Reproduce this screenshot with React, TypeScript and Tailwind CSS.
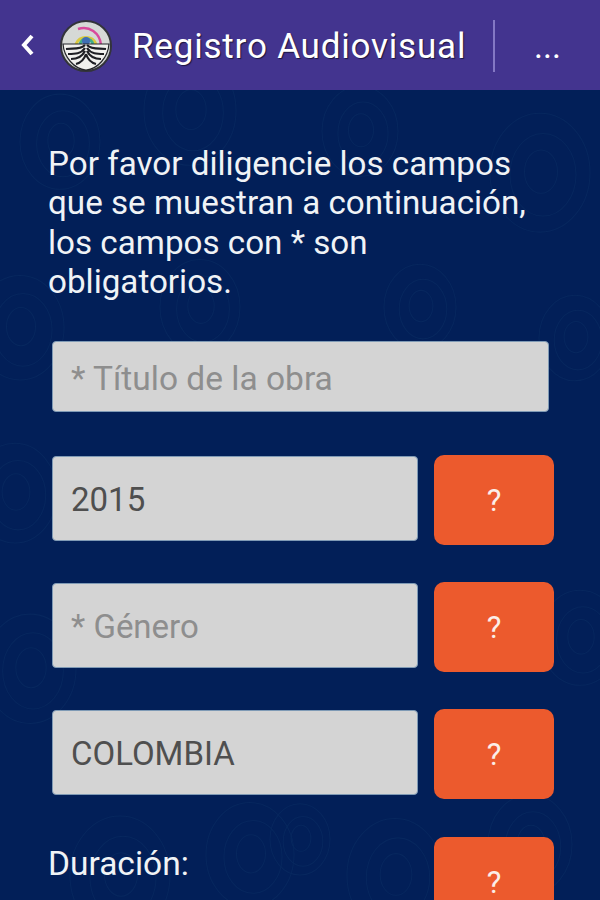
const font = "font-['Roboto','Liberation_Sans',sans-serif]";

function Logo() {
  return (
    <svg width="54" height="54" viewBox="0 0 54 54" className="shrink-0">
      <circle cx="27" cy="27" r="25" fill="#d6d9d6" stroke="#33343a" strokeWidth="2" />
      <path d="M19 10 C 30 6, 41 14, 42 26" fill="none" stroke="#d84a9c" strokeWidth="2.5" />
      <path d="M17 25 A 11 11 0 0 1 37 25" fill="none" stroke="#d9c93f" strokeWidth="3" />
      <path d="M21 25 A 7 8 0 0 1 34 25" fill="none" stroke="#3fae8c" strokeWidth="3" />
      <circle cx="27" cy="22" r="4" fill="#3f6fb5" />
      <path d="M4 25 H50 C 49 38, 39 50, 27 51 C 15 50, 5 38, 4 25 Z" fill="#f1f1ee" stroke="#25262a" strokeWidth="1.2" />
      <path d="M7 30 C 14 29, 21 31, 26 26 M9 35 C 16 35, 22 35, 26 29 M12 40 C 18 40, 23 38, 26 32 M17 45 C 21 44, 25 41, 27 35 M47 30 C 40 29, 33 31, 28 26 M45 35 C 38 35, 32 35, 28 29 M42 40 C 36 40, 31 38, 28 32 M37 45 C 33 44, 29 41, 27 35" fill="none" stroke="#1e1f24" strokeWidth="2.2" />
    </svg>
  );
}

function Swirls() {
  const rings = [
    [60, 140, 40], [190, 110, 46], [360, 130, 38], [540, 170, 50],
    [20, 320, 44], [575, 330, 36], [15, 480, 42], [580, 620, 40],
    [30, 650, 46], [120, 850, 50], [250, 830, 44], [395, 850, 48],
    [300, 815, 30], [530, 820, 42], [200, 300, 40], [420, 300, 36],
  ];
  return (
    <svg className="absolute inset-0 w-full h-full" viewBox="0 0 600 810" preserveAspectRatio="none">
      {rings.map(([x, y, r]) => (
        <g key={`${x}-${y}`} fill="none" stroke="#07275e" strokeWidth="1">
          <ellipse cx={x} cy={y - 90} rx={r} ry={r * 1.15} />
          <ellipse cx={x + 3} cy={y - 88} rx={r * 0.66} ry={r * 0.8} />
          <ellipse cx={x + 1} cy={y - 91} rx={r * 0.33} ry={r * 0.42} />
        </g>
      ))}
    </svg>
  );
}

function HelpButton({ className = "h-[90px] -mt-[1px]" }: { className?: string }) {
  return (
    <button className={`w-[120px] shrink-0 rounded-[10px] bg-[#ec5a2d] text-[#fbeee8] text-[31px] leading-none ${className}`}>
      ?
    </button>
  );
}

function Field({ value, placeholder }: { value?: string; placeholder?: boolean }) {
  return (
    <div
      className={`w-[366px] h-[85px] rounded-[4px] bg-[#d4d4d4] border border-[#7f9ab5] flex items-center pl-[18px] pt-[2px] text-[33px] ${
        placeholder ? "text-[#8e8e8e]" : "text-[#4f4f4f]"
      }`}
    >
      {value}
    </div>
  );
}

export default function App() {
  return (
    <div className={`w-[600px] h-[900px] overflow-hidden flex flex-col bg-[#021f58] ${font}`}>
      <header className="h-[90px] shrink-0 bg-[#43348f] flex items-center text-white">
        <svg width="16" height="24" viewBox="0 0 16 24" className="ml-[20px] shrink-0">
          <path d="M12 3 L4 12 L12 21" fill="none" stroke="#fff" strokeWidth="4" />
        </svg>
        <div className="ml-[23px] pt-[2px]">
          <Logo />
        </div>
        <h1 className="ml-[19px] pt-[5px] text-[35px] tracking-[0.8px] whitespace-nowrap w-[361px] [text-shadow:1px_1px_1px_#1b1640]">
          Registro Audiovisual
        </h1>
        <div className="w-[2px] h-[52px] mt-[2px] bg-[#8478c4]" />
        <div className="ml-[39px] text-[34px] leading-none pt-[2px]">...</div>
      </header>

      <main className="relative flex-1">
        <Swirls />
        <div className="relative pt-[54px]">
          <p className="pl-[48px] pr-[60px] text-[33.2px] leading-[39.3px] text-[#f0f3f6]">
            Por favor diligencie los campos que se muestran a continuación, los campos con * son obligatorios.
          </p>

          <div className="ml-[52px] mt-[40px] w-[497px] h-[71px] rounded-[4px] bg-[#d4d4d4] border border-[#7f9ab5] flex items-center pl-[18px] pt-[4px] text-[33.5px] text-[#8e8e8e]">
            * Título de la obra
          </div>

          <div className="mt-[44px] ml-[52px] flex flex-col gap-[42px]">
            <div className="flex gap-[16px] h-[85px]">
              <Field value="2015" />
              <HelpButton />
            </div>
            <div className="flex gap-[16px] h-[85px]">
              <Field value="* Género" placeholder />
              <HelpButton />
            </div>
            <div className="flex gap-[16px] h-[85px]">
              <Field value="COLOMBIA" />
              <HelpButton />
            </div>
            <div className="flex justify-between items-start w-[502px]">
              <span className="-ml-[4px] mt-[7px] text-[33.5px] leading-[39px] text-[#f0f3f6]">Duración:</span>
              <HelpButton className="h-[90px]" />
            </div>
          </div>
        </div>
      </main>
    </div>
  );
}
